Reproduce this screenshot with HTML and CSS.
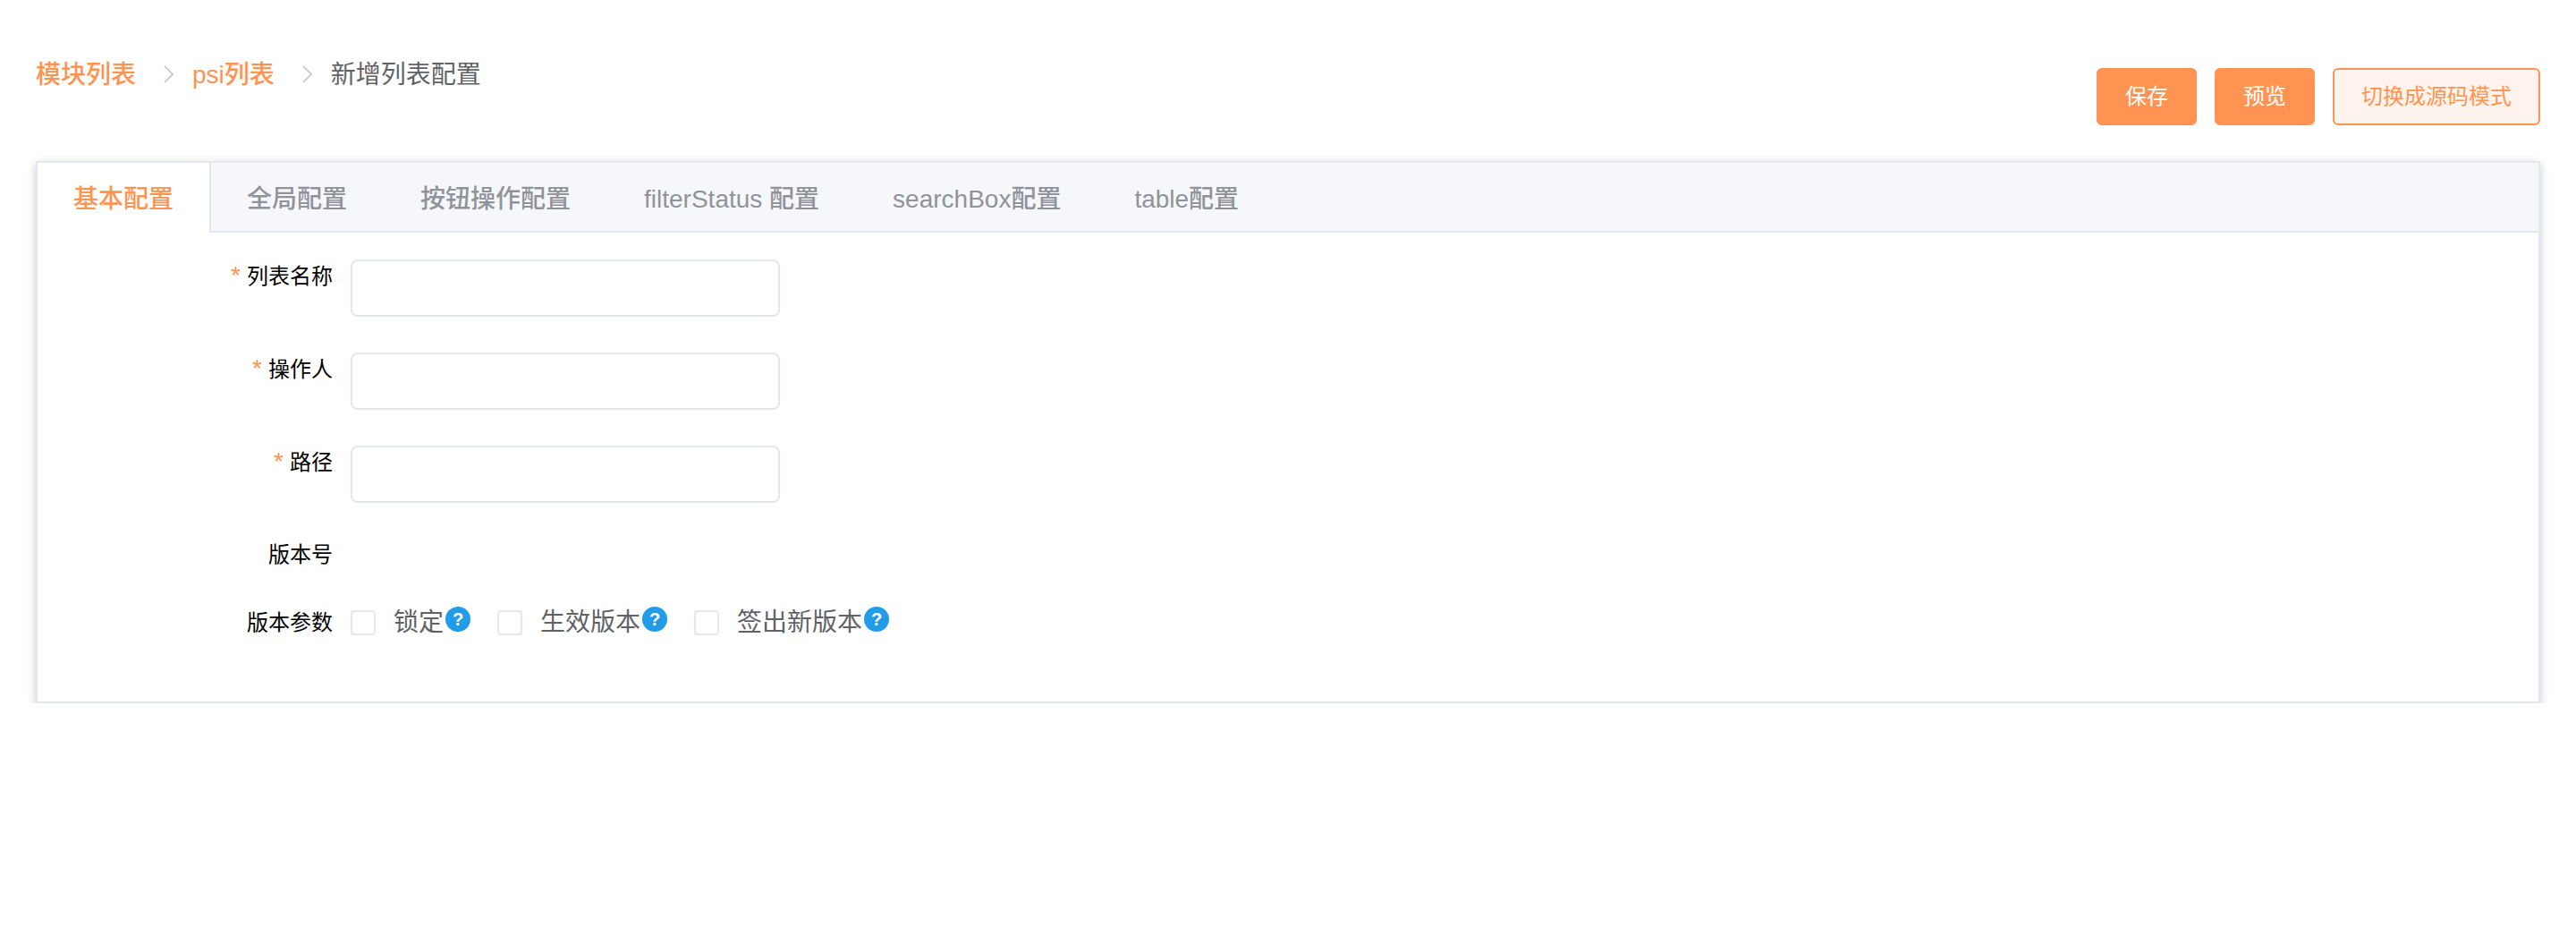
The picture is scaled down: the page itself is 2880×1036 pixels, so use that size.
FILE: index.html
```html
<!DOCTYPE html>
<html lang="zh-CN">
<head>
<meta charset="UTF-8">
<meta name="viewport" content="width=device-width, initial-scale=1.0">
<title>新增列表配置</title>
<link rel="stylesheet" href="styles.css">
</head>
<body>

<header class="topbar">
    <nav class="breadcrumb">
        <a href="#">模块列表</a>
        <svg class="sep" viewBox="0 0 11 20"><path d="M1 1l9 9-9 9"/></svg>
        <a href="#">psi列表</a>
        <svg class="sep" viewBox="0 0 11 20"><path d="M1 1l9 9-9 9"/></svg>
        <span>新增列表配置</span>
    </nav>
    <div class="acoes">
        <button class="btn">保存</button>
        <button class="btn">预览</button>
        <button class="btn btn-plain">切换成源码模式</button>
    </div>
</header>

<section class="card">
    <div class="tabs">
        <div class="tab active">基本配置</div>
        <div class="tab">全局配置</div>
        <div class="tab">按钮操作配置</div>
        <div class="tab">filterStatus 配置</div>
        <div class="tab">searchBox配置</div>
        <div class="tab">table配置</div>
    </div>

    <form class="form">
        <div class="row">
            <label class="label required">列表名称</label>
            <input class="input" type="text">
        </div>
        <div class="row">
            <label class="label required">操作人</label>
            <input class="input" type="text">
        </div>
        <div class="row">
            <label class="label required">路径</label>
            <input class="input" type="text">
        </div>
        <div class="row">
            <label class="label">版本号</label>
        </div>
        <div class="row">
            <label class="label">版本参数</label>
            <div class="checks">
                <label class="check"><input type="checkbox"><span>锁定</span><i class="help">?</i></label>
                <label class="check"><input type="checkbox"><span>生效版本</span><i class="help">?</i></label>
                <label class="check"><input type="checkbox"><span>签出新版本</span><i class="help">?</i></label>
            </div>
        </div>
    </form>
</section>

</body>
</html>
```

FILE: styles.css
```css
:root {
    --primary: #ff9351;
    --line: #e4e7ed;
    --text: #606266;
    --muted: #909399;
}
body {
    margin: 0;
    background: #fff;
    color: var(--text);
    font-family: "Liberation Sans", "Noto Sans CJK SC", sans-serif;
    font-size: 28px;
}
.topbar {
    display: flex;
    justify-content: space-between;
    align-items: flex-start;
    height: 120px;
    padding: 60px 40px 0;
}
.breadcrumb {
    display: flex;
    align-items: center;
    margin-top: 10px;
    line-height: 28px;
}
.breadcrumb a {
    color: var(--primary);
    font-weight: 500;
    text-decoration: none;
}
.sep {
    width: 11px;
    height: 20px;
    margin: -2px 21px 0 31px;
    fill: none;
    stroke: #c0c4cc;
    stroke-width: 1.6;
}
.acoes {
    display: flex;
    gap: 20px;
    margin-top: 16px;
}
.btn {
    height: 64px;
    padding: 0 30px 6px;
    border: 2px solid var(--primary);
    border-radius: 6px;
    background: var(--primary);
    color: #fff;
    font: inherit;
    font-size: 24px;
}
.btn-plain {
    background: #fff3ee;
    color: var(--primary);
}
.card {
    margin: 0 40px;
    border: 2px solid var(--line);
    background: #fff;
    box-shadow: 0 4px 10px rgba(0, 0, 0, .16), 0 0 12px rgba(0, 0, 0, .05);
}
.tabs {
    display: flex;
    height: 76px;
    background: #f5f7fa;
    border-bottom: 2px solid var(--line);
}
.tab {
    height: 76px;
    padding: 0 40px;
    margin-right: 2px;
    color: var(--muted);
    font-weight: 500;
    line-height: 82px;
}
.tab.active {
    height: 78px;
    margin: 0 0 -2px;
    border-right: 2px solid var(--line);
    background: #fff;
    color: var(--primary);
}
.form {
    padding: 30px 0 70px;
}
.row {
    display: flex;
    align-items: flex-start;
}
.row + .row {
    margin-top: 40px;
}
.label {
    width: 330px;
    padding-right: 20px;
    color: #000;
    font-size: 24px;
    line-height: 36px;
    text-align: right;
}
.required::before {
    content: "*";
    margin-right: 7px;
    color: var(--primary);
    font-size: 28px;
}
.input {
    box-sizing: border-box;
    width: 480px;
    height: 64px;
    border: 2px solid var(--line);
    border-radius: 8px;
    background: #fff;
}
.checks {
    display: flex;
    gap: 30px;
    height: 36px;
}
.check {
    display: flex;
    align-items: center;
    line-height: 36px;
}
.check input {
    appearance: none;
    box-sizing: border-box;
    width: 28px;
    height: 28px;
    margin: 0 20px 0 0;
    border: 2px solid var(--line);
    border-radius: 4px;
    background: #fff;
}
.help {
    width: 28px;
    height: 28px;
    margin: -8px 0 0 2px;
    border-radius: 50%;
    background: #229ce8;
    color: #fff;
    font-size: 20px;
    font-style: normal;
    font-weight: 700;
    line-height: 28px;
    text-align: center;
}
```
